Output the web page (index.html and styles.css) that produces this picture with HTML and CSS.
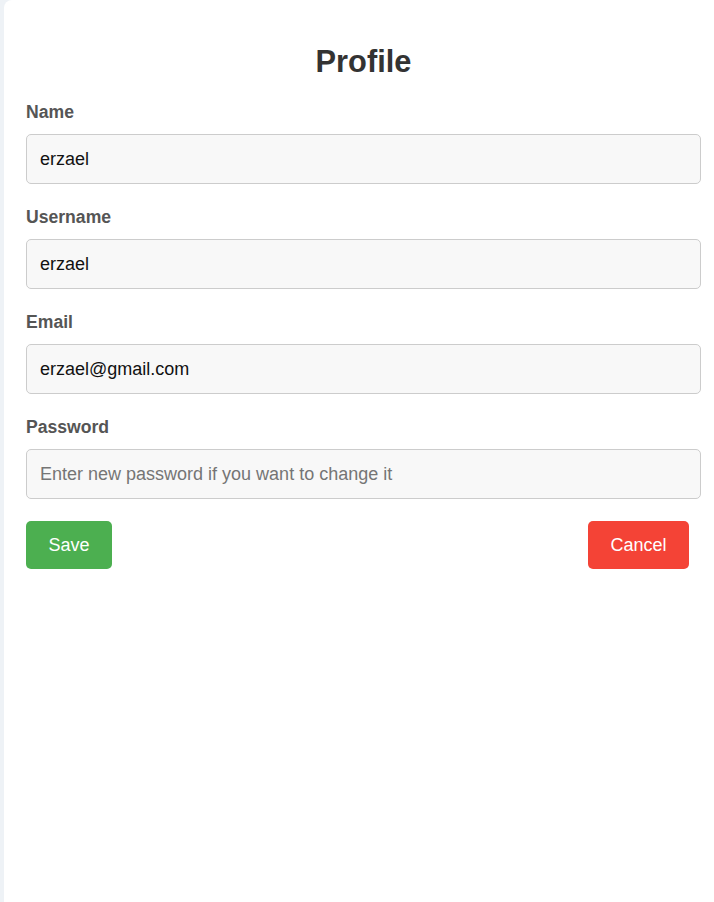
FILE: index.html
```html
<!DOCTYPE html>
<html lang="en">
<head>
<meta charset="utf-8">
<title>Profile</title>
<link rel="stylesheet" href="styles.css">
</head>
<body>
  <main class="card">
    <h1 class="title">Profile</h1>
    <form class="form">
      <div class="field">
        <label class="label" for="name">Name</label>
        <input class="input" id="name" type="text" value="erzael">
      </div>
      <div class="field">
        <label class="label" for="username">Username</label>
        <input class="input" id="username" type="text" value="erzael">
      </div>
      <div class="field">
        <label class="label" for="email">Email</label>
        <input class="input" id="email" type="email" value="erzael@gmail.com">
      </div>
      <div class="field">
        <label class="label" for="password">Password</label>
        <input class="input" id="password" type="password" placeholder="Enter new password if you want to change it">
      </div>
      <div class="actions">
        <button class="btn btn-save" type="button">Save</button>
        <button class="btn btn-cancel" type="button">Cancel</button>
      </div>
    </form>
  </main>
</body>
</html>
```

FILE: styles.css
```css
html, body {
  margin: 0;
  padding: 0;
  overflow: hidden;
}

body {
  background: #eef2f6;
  font-family: "Liberation Sans", Arial, sans-serif;
  height: 902px;
}

.card {
  box-sizing: border-box;
  width: 719px;
  min-height: 902px;
  margin-left: 4px;
  padding: 1px 22px 20px;
  background: #ffffff;
  border-radius: 8px 8px 0 0;
}

.title {
  margin: 43px 0 23px;
  text-align: center;
  font-size: 30.8px;
  font-weight: bold;
  color: #333333;
  line-height: 35px;
}

.form {
  display: flex;
  flex-direction: column;
}

.field {
  display: flex;
  flex-direction: column;
  margin-bottom: 23px;
}

.label {
  font-size: 17.6px;
  font-weight: bold;
  color: #555555;
  line-height: 20px;
  margin-bottom: 12px;
}

.input {
  box-sizing: border-box;
  height: 50px;
  width: 100%;
  margin: 0;
  padding: 0 13px;
  border: 1px solid #cccccc;
  border-radius: 5px;
  background: #f8f8f8;
  font-family: "Liberation Sans", Arial, sans-serif;
  font-size: 18px;
  color: #111111;
}

.input::placeholder {
  color: #757575;
}

.actions {
  display: flex;
  justify-content: space-between;
  padding-right: 12px;
  margin-top: -1px;
}

.btn {
  box-sizing: border-box;
  height: 48px;
  padding: 0 22px;
  border: none;
  border-radius: 5px;
  color: #ffffff;
  font-family: "Liberation Sans", Arial, sans-serif;
  font-size: 18px;
  cursor: pointer;
}

.btn-save {
  background: #4caf50;
  width: 86px;
}

.btn-cancel {
  background: #f44336;
  width: 101px;
}
```
